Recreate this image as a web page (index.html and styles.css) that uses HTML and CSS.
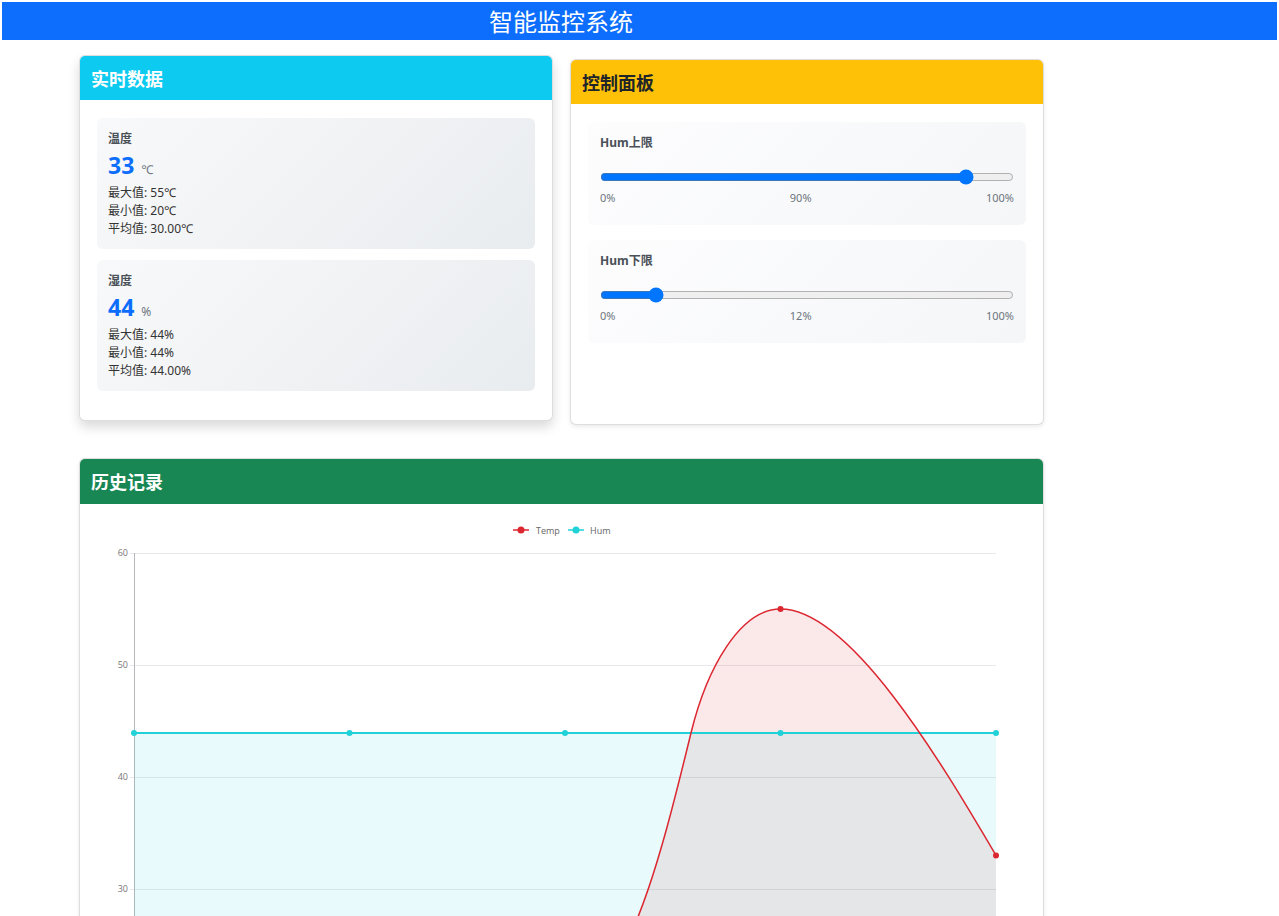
FILE: index.html
```html
<!DOCTYPE html>
<html lang="zh-CN">
<head>
<meta charset="utf-8">
<title>智能监控系统</title>
<link rel="stylesheet" href="styles.css">
</head>
<body>
<div class="page">
  <header class="topbar"><h1 class="title">智能监控系统</h1></header>
  <main class="content">
    <div class="row">
      <section class="card card-lift">
        <div class="card-head head-info">实时数据</div>
        <div class="card-body">
          <div class="stat">
            <div class="stat-label">温度</div>
            <div class="stat-value"><span class="num">33</span><span class="unit">℃</span></div>
            <div class="stat-line">最大值: 55℃</div>
            <div class="stat-line">最小值: 20℃</div>
            <div class="stat-line">平均值: 30.00℃</div>
          </div>
          <div class="stat">
            <div class="stat-label">湿度</div>
            <div class="stat-value"><span class="num">44</span><span class="unit">%</span></div>
            <div class="stat-line">最大值: 44%</div>
            <div class="stat-line">最小值: 44%</div>
            <div class="stat-line">平均值: 44.00%</div>
          </div>
        </div>
      </section>
      <section class="card">
        <div class="card-head head-warn">控制面板</div>
        <div class="card-body">
          <div class="ctrl">
            <div class="ctrl-label">Hum上限</div>
            <input class="slider" type="range" min="0" max="100" value="90">
            <div class="ctrl-scale"><span>0%</span><span>90%</span><span>100%</span></div>
          </div>
          <div class="ctrl">
            <div class="ctrl-label">Hum下限</div>
            <input class="slider" type="range" min="0" max="100" value="12">
            <div class="ctrl-scale"><span>0%</span><span>12%</span><span>100%</span></div>
          </div>
        </div>
      </section>
    </div>
    <section class="card card-history">
      <div class="card-head head-success">历史记录</div>
      <div class="chart-body">
        <svg class="chart" width="929" height="530" viewBox="0 0 929 530">
          <g class="legend">
            <line x1="416" y1="15" x2="432" y2="15" stroke="#dc2630" stroke-width="1.5"/>
            <circle cx="424" cy="15" r="3.5" fill="#dc2630"/>
            <text x="439" y="18.5" class="legend-text">Temp</text>
            <line x1="471" y1="15" x2="487" y2="15" stroke="#20d2d7" stroke-width="1.5"/>
            <circle cx="479" cy="15" r="3.5" fill="#20d2d7"/>
            <text x="493" y="18.5" class="legend-text">Hum</text>
          </g>
          <g class="grid">
            <line x1="33" y1="38.5" x2="899" y2="38.5"/>
            <line x1="33" y1="150.5" x2="899" y2="150.5"/>
            <line x1="33" y1="262.5" x2="899" y2="262.5"/>
            <line x1="33" y1="374.5" x2="899" y2="374.5"/>
            <line x1="33" y1="486.5" x2="899" y2="486.5"/>
          </g>
          <line class="axis" x1="37.5" y1="38" x2="37.5" y2="487"/>
          <g class="ticks">
            <text x="31" y="41">60</text>
            <text x="31" y="153">50</text>
            <text x="31" y="265">40</text>
            <text x="31" y="377">30</text>
            <text x="31" y="489">20</text>
          </g>
          <path class="temp-fill" d="M37 463.6 C108.8 471.1 180.7 486 252.5 486 L468 486 C528 486 563 345 594 218 C610 152.4 643.5 94 683.5 94 C753 94 843 245 899 340.4 L899 486 L37 486 Z"/>
          <path class="hum-fill" d="M37 218 L899 218 L899 486 L37 486 Z"/>
          <path class="hum-line" d="M37 218 L899 218"/>
          <g class="hum-dots">
            <circle cx="37" cy="218" r="3"/>
            <circle cx="252.5" cy="218" r="3"/>
            <circle cx="468" cy="218" r="3"/>
            <circle cx="683.5" cy="218" r="3"/>
            <circle cx="899" cy="218" r="3"/>
          </g>
          <path class="temp-line" d="M37 463.6 C108.8 471.1 180.7 486 252.5 486 L468 486 C528 486 563 345 594 218 C610 152.4 643.5 94 683.5 94 C753 94 843 245 899 340.4"/>
          <g class="temp-dots">
            <circle cx="37" cy="463.6" r="3"/>
            <circle cx="252.5" cy="486" r="3"/>
            <circle cx="468" cy="486" r="3"/>
            <circle cx="683.5" cy="94" r="3"/>
            <circle cx="899" cy="340.4" r="3"/>
          </g>
        </svg>
      </div>
    </section>
  </main>
</div>
</body>
</html>
```
FILE: styles.css
```css
body {
  margin: 0;
  background: #fff;
  font-family: "Noto Sans", "Noto Sans CJK SC", sans-serif;
  color: #212529;
}

.page {
  padding: 2px;
}

.topbar {
  background: #0d6efd;
  height: 38px;
  display: flex;
  align-items: center;
  padding-left: 487px;
}

.title {
  margin: 0;
  font-family: "Noto Sans CJK SC", sans-serif;
  font-size: 24px;
  font-weight: 400;
  line-height: 38px;
  color: #fff;
}

.content {
  width: 965px;
  margin: 19px 0 0 77px;
}

.row {
  display: grid;
  grid-template-columns: 1fr 1fr;
  gap: 17px;
}

.card {
  background: #fff;
  border: 1px solid rgba(0, 0, 0, 0.13);
  border-radius: 6px;
  box-shadow: 0 2px 4px rgba(0, 0, 0, 0.08);
  overflow: hidden;
}

.card-lift {
  transform: translateY(-4px);
  box-shadow: 0 6px 12px rgba(0, 0, 0, 0.15);
}

.card-head {
  height: 44px;
  line-height: 44px;
  padding: 0 11px;
  font-family: "Noto Sans CJK SC", sans-serif;
  font-size: 18px;
  font-weight: 700;
}

.head-info {
  background: #0dcaf0;
  color: #fff;
}

.head-warn {
  background: #ffc107;
  color: #212529;
}

.head-success {
  height: 45px;
  line-height: 45px;
  background: #198754;
  color: #fff;
}

.card-body {
  padding: 18px 17px;
}

.stat {
  padding: 12px 11px 11px;
  margin-bottom: 11px;
  border-radius: 6px;
  background: linear-gradient(135deg, #f8f9fa, #e9ecef);
}

.stat-label {
  height: 18px;
  font-size: 12px;
  font-weight: 600;
  line-height: 18px;
  color: #495057;
}

.stat-value {
  display: flex;
  align-items: baseline;
  height: 27px;
  margin: 4px 0 5px;
  line-height: 27px;
}

.num {
  font-size: 23px;
  font-weight: 700;
  line-height: 27px;
  color: #0d6efd;
}

.unit {
  margin-left: 7px;
  font-size: 12px;
  line-height: 27px;
  color: #6c757d;
}

.stat-line {
  height: 18px;
  font-size: 12px;
  line-height: 18px;
  color: #333;
}

.ctrl {
  padding: 12px 12px 18px;
  margin-bottom: 15px;
  border-radius: 6px;
  background: linear-gradient(135deg, #fdfdfe, #f5f6f8);
}

.ctrl-label {
  height: 18px;
  font-size: 12px;
  font-weight: 700;
  line-height: 18px;
  color: #495057;
}

.slider {
  display: block;
  width: 100%;
  height: 16px;
  margin: 17px 0 0;
}

.ctrl-scale {
  display: flex;
  justify-content: space-between;
  height: 18px;
  margin-top: 4px;
  font-size: 11px;
  line-height: 18px;
  color: #6c757d;
}

.card-history {
  margin-top: 33px;
}

.chart-body {
  padding: 11px 17px 20px;
}

.chart {
  display: block;
  font-family: "Open Sans", "Liberation Sans", sans-serif;
}

.legend-text {
  font-size: 9px;
  fill: #666;
}

.grid line {
  stroke: #e8e8ec;
  stroke-width: 1;
}

.axis {
  stroke: #b8b8bc;
  stroke-width: 1;
}

.ticks text {
  font-size: 9px;
  fill: #777;
  text-anchor: end;
}

.hum-fill {
  fill: rgba(32, 210, 215, 0.1);
}

.temp-fill {
  fill: rgba(220, 38, 48, 0.1);
}

.hum-line {
  fill: none;
  stroke: #20d2d7;
  stroke-width: 2;
}

.hum-dots circle {
  fill: #20d2d7;
}

.temp-line {
  fill: none;
  stroke: #dc2630;
  stroke-width: 1.5;
}

.temp-dots circle {
  fill: #dc2630;
}
```
